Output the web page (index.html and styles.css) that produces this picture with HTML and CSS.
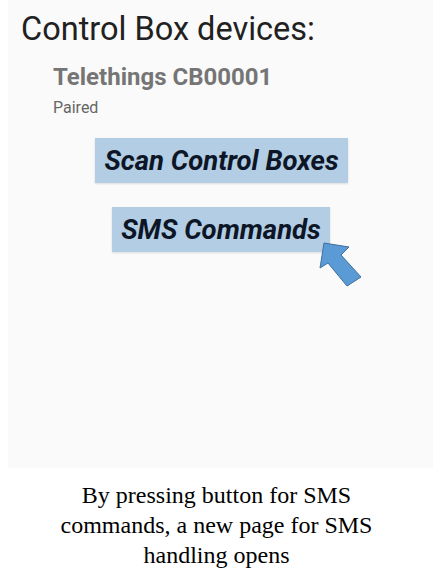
FILE: index.html
```html
<!DOCTYPE html>
<html>
<head>
<meta charset="utf-8">
<link rel="stylesheet" href="styles.css">
</head>
<body>
<div class="screen">
  <h1 class="title">Control Box devices:</h1>
  <div class="device">
    <div class="device-name">Telethings CB00001</div>
    <div class="device-status">Paired</div>
  </div>
  <div class="actions">
    <div class="btn btn-scan">Scan Control Boxes</div>
    <div class="btn btn-sms">SMS Commands</div>
  </div>
  <svg class="pointer" width="60" height="60" viewBox="0 0 60 60">
    <polygon points="12,4 37,8 29,16 49,38 35,47 16,24 8,29" fill="#5b9bd5" stroke="#3f6f9e" stroke-width="1" stroke-linejoin="miter"/>
  </svg>
</div>
<p class="caption">By pressing button for SMS<br>commands, a new page for SMS<br>handling opens</p>
</body>
</html>
```
FILE: styles.css
```css
html, body {
  margin: 0;
  padding: 0;
  background: #ffffff;
}
.screen {
  position: relative;
  margin-left: 8px;
  height: 468px;
  background: #fafafa;
  box-sizing: border-box;
  padding: 10px 0 0 13px;
  font-family: Roboto, "Liberation Sans", sans-serif;
}
.title {
  margin: 0;
  font-size: 32.5px;
  font-weight: 400;
  line-height: 38px;
  color: #212121;
}
.device {
  padding-left: 32px;
  margin-top: 15px;
}
.device-name {
  font-size: 24px;
  font-weight: 700;
  line-height: 28px;
  color: #757575;
}
.device-status {
  margin-top: 8px;
  font-size: 16px;
  line-height: 18px;
  color: #666666;
}
.actions {
  display: flex;
  flex-direction: column;
  align-items: center;
  gap: 24px;
  margin-top: 21px;
  margin-left: -13px;
}
.btn {
  background: #b3cde5;
  color: #0d1626;
  font-size: 27.5px;
  font-weight: 700;
  font-style: italic;
  height: 45px;
  line-height: 45px;
  padding: 0 9px;
  box-shadow: 0 1px 2px rgba(0,0,0,0.12);
}
.btn-scan {
  margin-left: 2px;
}
.btn-sms {
  margin-left: 1px;
}
.pointer {
  position: absolute;
  left: 304px;
  top: 239px;
}
.caption {
  margin: 12px 0 0 0;
  text-align: center;
  font-family: "Liberation Serif", "DejaVu Serif", serif;
  font-size: 24px;
  line-height: 30px;
  color: #000000;
}
```
